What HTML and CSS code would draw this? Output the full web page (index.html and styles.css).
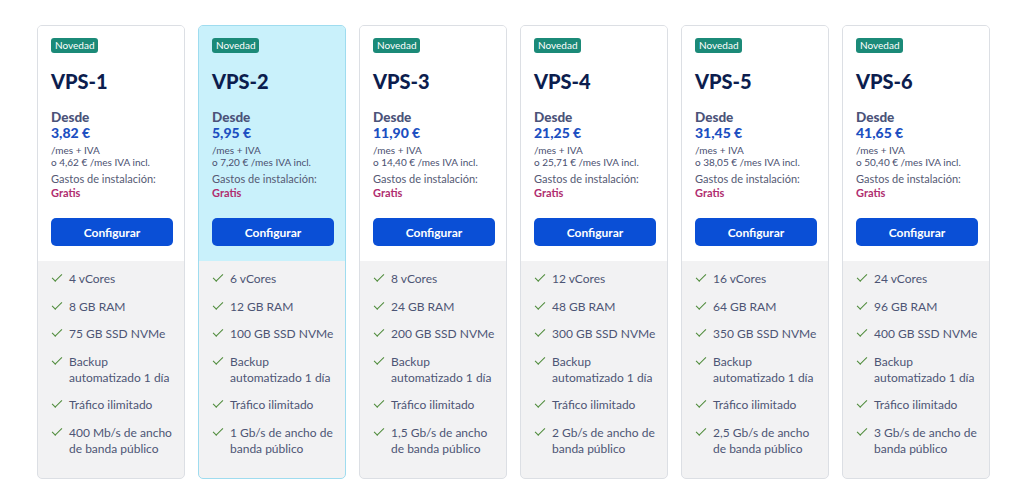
FILE: index.html
```html
<!DOCTYPE html><html lang="es">
<head>
  <meta charset="UTF-8" />
  <title>Servidores VPS</title>
  <link rel="stylesheet" href="styles.css">
</head>
<body>
  <div class="plans">
    <div class="plan">
      <div class="plan-top">
        <span class="badge">Novedad</span>
        <div class="plan-name">VPS-1</div>
        <div class="from">Desde</div>
        <div class="price">3,82 €</div>
        <div class="small">/mes + IVA</div>
        <div class="small">o 4,62 € /mes IVA incl.</div>
        <div class="setup">Gastos de instalación:</div>
        <div class="free">Gratis</div>
        <button class="cfg">Configurar</button>
      </div>
      <ul class="features">
        <li>4 vCores</li>
        <li>8 GB RAM</li>
        <li>75 GB SSD NVMe</li>
        <li>Backup automatizado 1 día</li>
        <li>Tráfico ilimitado</li>
        <li>400 Mb/s de ancho de banda público</li>
      </ul>
    </div>
    <div class="plan active">
      <div class="plan-top">
        <span class="badge">Novedad</span>
        <div class="plan-name">VPS-2</div>
        <div class="from">Desde</div>
        <div class="price">5,95 €</div>
        <div class="small">/mes + IVA</div>
        <div class="small">o 7,20 € /mes IVA incl.</div>
        <div class="setup">Gastos de instalación:</div>
        <div class="free">Gratis</div>
        <button class="cfg">Configurar</button>
      </div>
      <ul class="features">
        <li>6 vCores</li>
        <li>12 GB RAM</li>
        <li>100 GB SSD NVMe</li>
        <li>Backup automatizado 1 día</li>
        <li>Tráfico ilimitado</li>
        <li>1 Gb/s de ancho de banda público</li>
      </ul>
    </div>
    <div class="plan">
      <div class="plan-top">
        <span class="badge">Novedad</span>
        <div class="plan-name">VPS-3</div>
        <div class="from">Desde</div>
        <div class="price">11,90 €</div>
        <div class="small">/mes + IVA</div>
        <div class="small">o 14,40 € /mes IVA incl.</div>
        <div class="setup">Gastos de instalación:</div>
        <div class="free">Gratis</div>
        <button class="cfg">Configurar</button>
      </div>
      <ul class="features">
        <li>8 vCores</li>
        <li>24 GB RAM</li>
        <li>200 GB SSD NVMe</li>
        <li>Backup automatizado 1 día</li>
        <li>Tráfico ilimitado</li>
        <li>1,5 Gb/s de ancho de banda público</li>
      </ul>
    </div>
    <div class="plan">
      <div class="plan-top">
        <span class="badge">Novedad</span>
        <div class="plan-name">VPS-4</div>
        <div class="from">Desde</div>
        <div class="price">21,25 €</div>
        <div class="small">/mes + IVA</div>
        <div class="small">o 25,71 € /mes IVA incl.</div>
        <div class="setup">Gastos de instalación:</div>
        <div class="free">Gratis</div>
        <button class="cfg">Configurar</button>
      </div>
      <ul class="features">
        <li>12 vCores</li>
        <li>48 GB RAM</li>
        <li>300 GB SSD NVMe</li>
        <li>Backup automatizado 1 día</li>
        <li>Tráfico ilimitado</li>
        <li>2 Gb/s de ancho de banda público</li>
      </ul>
    </div>
    <div class="plan">
      <div class="plan-top">
        <span class="badge">Novedad</span>
        <div class="plan-name">VPS-5</div>
        <div class="from">Desde</div>
        <div class="price">31,45 €</div>
        <div class="small">/mes + IVA</div>
        <div class="small">o 38,05 € /mes IVA incl.</div>
        <div class="setup">Gastos de instalación:</div>
        <div class="free">Gratis</div>
        <button class="cfg">Configurar</button>
      </div>
      <ul class="features">
        <li>16 vCores</li>
        <li>64 GB RAM</li>
        <li>350 GB SSD NVMe</li>
        <li>Backup automatizado 1 día</li>
        <li>Tráfico ilimitado</li>
        <li>2,5 Gb/s de ancho de banda público</li>
      </ul>
    </div>
    <div class="plan">
      <div class="plan-top">
        <span class="badge">Novedad</span>
        <div class="plan-name">VPS-6</div>
        <div class="from">Desde</div>
        <div class="price">41,65 €</div>
        <div class="small">/mes + IVA</div>
        <div class="small">o 50,40 € /mes IVA incl.</div>
        <div class="setup">Gastos de instalación:</div>
        <div class="free">Gratis</div>
        <button class="cfg">Configurar</button>
      </div>
      <ul class="features">
        <li>24 vCores</li>
        <li>96 GB RAM</li>
        <li>400 GB SSD NVMe</li>
        <li>Backup automatizado 1 día</li>
        <li>Tráfico ilimitado</li>
        <li>3 Gb/s de ancho de banda público</li>
      </ul>
    </div>
  </div>
</body>
</html>
```

FILE: styles.css
```css
body { margin: 0; background: #fff; font-family: 'Lato', 'Liberation Sans', sans-serif; color: #4a5272; }
.plans { display: flex; gap: 13px; padding: 25px 0 0 37px; }
.plan { width: 148px; height: 454px; box-sizing: border-box; border: 1px solid #dcdfe4; border-radius: 5px; background: #f2f2f3; overflow: hidden; display: flex; flex-direction: column; }
.plan-top { background: #fff; padding: 12px 13px 13px; display: flex; flex-direction: column; align-items: flex-start; height: 235px; box-sizing: border-box; }
.active { border-color: #9fdcef; }
.active .plan-top { background: #c9f1fb; }
.badge { background: #1b8a78; color: #fff; font-size: 10px; line-height: 15px; padding: 0 4px; border-radius: 3px; }
.plan-name { margin-top: 16px; font-size: 20px; line-height: 24px; font-weight: 900; color: #0c1d4e; }
.from { margin-top: 16px; font-size: 13.5px; line-height: 16px; font-weight: 900; color: #4b5379; }
.price { font-size: 14px; line-height: 16px; font-weight: 900; color: #1c4fc1; }
.small { font-size: 10px; line-height: 12px; color: #4a5070; }
.price + .small { margin-top: 3px; }
.setup { margin-top: 4px; font-size: 11px; line-height: 14px; color: #555a74; }
.free { font-size: 11px; line-height: 14px; font-weight: 700; color: #b02d6f; }
.cfg { margin-top: 18px; width: 122px; height: 28px; border: none; border-radius: 5px; background: #0a4fd6; color: #fff; font-family: inherit; font-size: 12px; font-weight: 700; cursor: pointer; }
.features { list-style: none; margin: 0; padding: 10px 10px 0 13px; display: flex; flex-direction: column; gap: 11.5px; }
.features li { position: relative; padding-left: 18px; font-size: 12px; line-height: 16px; color: #4d5575; }
.features li::before { content: ""; position: absolute; left: 1px; top: 3px; width: 9px; height: 4px; border: solid #4f8b3b; border-width: 0 0 1.6px 1.6px; transform: rotate(-45deg); }
```
